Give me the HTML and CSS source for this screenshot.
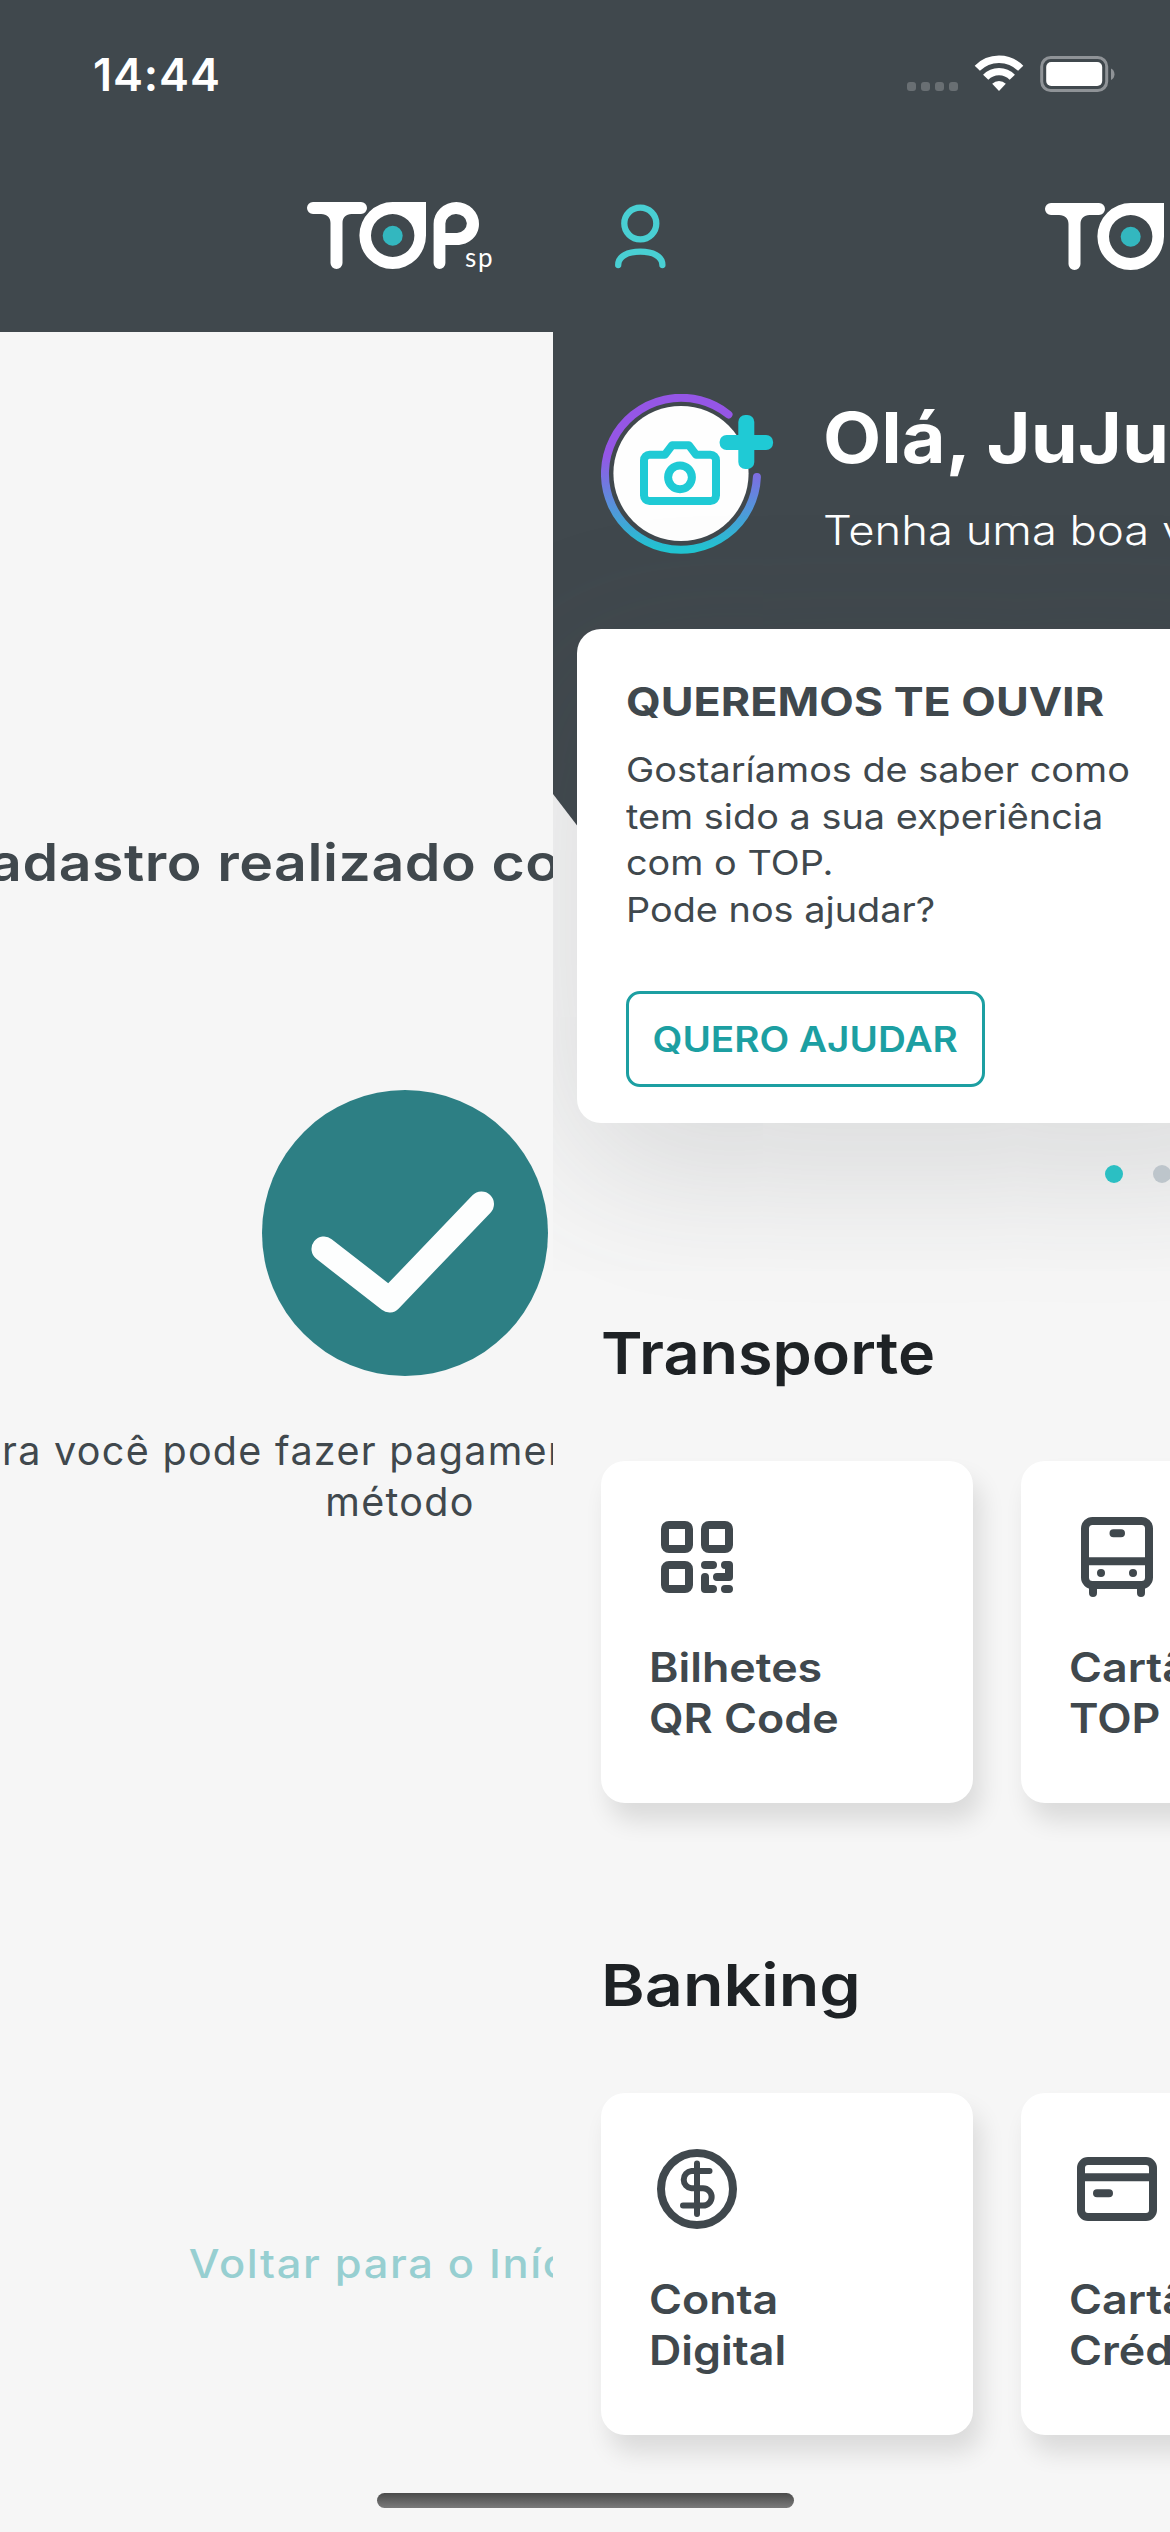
FILE: index.html
```html
<!DOCTYPE html>
<html lang="pt-BR">
<head>
<meta charset="utf-8">
<title>TOP</title>
<link rel="stylesheet" href="styles.css">
</head>
<body>
<svg class="defs" width="0" height="0" aria-hidden="true">
  <defs>
    <symbol id="logo" viewBox="0 0 190 76">
      <path fill="#fff" d="M8 2H56a6 6 0 0 1 0 12H46.500C41 14 37.500 17.500 37.500 23V63a6 6 0 0 1-12 0V23C25.500 17.500 22 14 16 14H8A6 6 0 0 1 8 2Z"/>
      <path fill="#fff" fill-rule="evenodd" d="M88 2h33v33.500A33.300 33.500 0 1 1 88 2ZM87.700 14a21.700 21.500 0 1 0 0 43a21.700 21.500 0 0 0 0-43Z"/>
      <circle cx="87.700" cy="35.700" r="10" fill="#33b7bf"/>
      <path fill="#fff" fill-rule="evenodd" d="M128.600 24a22.700 22 0 0 1 45.400 0c0 12-10 21-22 21h-11.600v18a5.900 6 0 0 1-11.800 0ZM140.400 33H152a10.700 9.500 0 1 0-11.600-9.500Z"/>
      <text x="160" y="66.500" class="logo__sp">sp</text>
    </symbol>
  </defs>
</svg>

<div class="phone">
  <div class="under">
  <main class="done">
    <header class="topbar"><svg class="logo" width="190" height="76"><use href="#logo"/></svg></header>
    <h1 class="done__title">Cadastro realizado com sucesso</h1>
    <svg class="done__check" viewBox="0 0 286 286">
      <circle cx="143" cy="143" r="143" fill="#2d7f84"/>
      <path d="M62 159 127.500 210 219.500 114" fill="none" stroke="#fdfefe" stroke-width="25" stroke-linecap="round" stroke-linejoin="round"/>
    </svg>
    <p class="done__text">Agora você pode fazer pagamentos com o novo<br>método</p>
    <a class="done__link">Voltar para o Início</a>
  </main>
  </div>

  <section class="home">
    <div class="home__backdrop"></div>
    <header class="topbar topbar--home">
      <svg class="user" width="52" height="68" viewBox="0 0 52 68" fill="none" stroke="#49cfd3" stroke-width="6.300" stroke-linecap="round">
        <ellipse cx="26.300" cy="22.500" rx="16" ry="15.800"/>
        <path d="M4.200 64C4.200 55 14 50.700 26.300 50.700S48.400 55 48.400 64"/>
      </svg>
      <svg class="logo" width="190" height="76"><use href="#logo"/></svg>
    </header>

    <div class="profile">
      <svg class="avatar" width="174" height="160" viewBox="0 0 174 160" fill="none">
        <defs>
          <linearGradient id="ring" x1="0" y1="0" x2="0" y2="160" gradientUnits="userSpaceOnUse">
            <stop offset=".380" stop-color="#9556e6"/>
            <stop offset=".970" stop-color="#22c5d2"/>
          </linearGradient>
        </defs>
        <path d="M127.500 20.500A76 76 0 1 0 155.900 83" stroke="url(#ring)" stroke-width="8" stroke-linecap="round"/>
        <circle cx="80" cy="79.500" r="67.600" fill="#fefefe"/>
        <g stroke="#1fcad5" stroke-width="8" stroke-linejoin="round">
          <path d="M48.500 60.700H64L71 51.300H88L95 60.700H109.500a5.500 5.500 0 0 1 5.500 5.500V101.500a5.500 5.500 0 0 1-5.500 5.500H48.500a5.500 5.500 0 0 1-5.500-5.500V66.200a5.500 5.500 0 0 1 5.500-5.500Z"/>
          <circle cx="79" cy="83.300" r="11.900"/>
        </g>
        <rect x="137.300" y="21" width="16" height="54" rx="7" fill="#1fcad5"/>
        <rect x="118.600" y="41" width="53.500" height="15" rx="7" fill="#1fcad5"/>
      </svg>
      <div class="profile__text">
        <h2 class="profile__name">Olá, JuJu!</h2>
        <p class="profile__sub">Tenha uma boa viagem</p>
      </div>
    </div>

    <article class="promo">
      <h3 class="promo__title">QUEREMOS TE OUVIR</h3>
      <p class="promo__text">Gostaríamos de saber como<br>tem sido a sua experiência<br>com o TOP.<br>Pode nos ajudar?</p>
      <a class="promo__btn"><span class="promo__btn-label">QUERO AJUDAR</span></a>
    </article>
    <div class="dots"><i class="dot dot--on"></i><i class="dot"></i></div>

    <h2 class="section">Transporte</h2>
    <div class="cards">
      <div class="card">
        <svg class="icon" viewBox="0 0 96 96">
          <rect x="16" y="16" width="24" height="24" rx="4"/>
          <rect x="56" y="16" width="24" height="24" rx="4"/>
          <rect x="16" y="56" width="24" height="24" rx="4"/>
          <path d="M56 56H64M76 56H80V68H68M56 68V80H64M76 80H80"/>
        </svg>
        <p class="card__label">Bilhetes<br>QR Code</p>
      </div>
      <div class="card">
        <svg class="icon" viewBox="0 0 96 96">
          <rect x="16" y="12" width="64" height="64" rx="7.500"/>
          <path d="M16 52.300H80M44.500 24.300H52M24 78V84M72 78V84"/>
          <path d="M32 64h.01M64 64h.01"/>
        </svg>
        <p class="card__label">Cartão<br>TOP</p>
      </div>
    </div>

    <h2 class="section section--banking">Banking</h2>
    <div class="cards">
      <div class="card">
        <svg class="icon" viewBox="0 0 96 96">
          <circle cx="48" cy="48" r="36"/>
          <path stroke-width="6" d="M48 22.500V73M60.500 30H42.500a8.700 8.700 0 0 0 0 17.300H54a8.600 8.600 0 0 1 0 17.300H34"/>
        </svg>
        <p class="card__label">Conta<br>Digital</p>
      </div>
      <div class="card">
        <svg class="icon" viewBox="0 0 96 96">
          <rect x="12" y="20" width="72" height="56" rx="7"/>
          <path d="M12 36.300H84M28 52.300H40"/>
        </svg>
        <p class="card__label">Cartão<br>Crédito</p>
      </div>
    </div>
  </section>

  <div class="status">
    <span class="status__time">14:44</span>
    <svg class="status__icons" width="212" height="40" viewBox="0 0 212 40">
      <g fill="#696f73">
        <rect x="0" y="28" width="9" height="9" rx="3"/><rect x="14" y="28" width="9" height="9" rx="3"/>
        <rect x="28" y="28" width="9" height="9" rx="3"/><rect x="42" y="28" width="9" height="9" rx="3"/>
      </g>
      <g fill="none" stroke="#fff" stroke-width="7.300">
        <path d="M70.300 14.300A30.500 30.500 0 0 1 113.700 14.300"/>
        <path d="M78.700 23.200A18.500 18.500 0 0 1 105.300 23.200"/>
      </g>
      <path fill="#fff" d="M85.200 29.700A9.600 9.600 0 0 1 98.800 29.700L92 37Z"/>
      <rect x="134.700" y="3.500" width="65" height="33" rx="9" fill="none" stroke="#8f9397" stroke-width="3"/>
      <rect x="139.200" y="8" width="56" height="24" rx="5" fill="#fff"/>
      <path fill="#8f9397" d="M204 14.500a6.500 6.500 0 0 1 0 11.500Z"/>
    </svg>
  </div>
  <div class="indicator"></div>
</div>
</body>
</html>
```

FILE: styles.css
```css
* { box-sizing: border-box; margin: 0; padding: 0; }
body { font-family: Inter, "Liberation Sans", sans-serif; color: #40484d; }
.defs { position: absolute; }

.phone { position: relative; width: 1170px; height: 2532px; overflow: hidden; background: #f6f6f6; }

/* Header shared by both screens */
.topbar { width: 100%; height: 332px; padding-top: 200px; background: #40484d; display: flex; justify-content: center; flex: none; }
.logo__sp { font: 400 26px Lato, sans-serif; letter-spacing: 1.800px; fill: #fff; }

/* Outgoing screen, slid to the left */
.under { width: 553px; height: 2532px; overflow: hidden; }
.done { width: 1170px; margin-left: -180px; display: flex; flex-direction: column; align-items: center; white-space: nowrap; }
.done .topbar { padding-right: 10px; }
.done__title { margin-top: 501px; font-size: 52px; line-height: 60px; font-weight: 600; letter-spacing: .500px; transform: scaleX(1.100); }
.done__check { width: 286px; height: 286px; margin-top: 196.500px; }
.done__text { margin: 50px 10px 0 0; font-size: 39.500px; line-height: 51px; letter-spacing: 1.300px; text-align: center; }
.done__link { margin: 712px 12px 0 0; font-size: 39.500px; line-height: 48px; font-weight: 500; letter-spacing: 1.500px; color: #97cfd1; transform: scaleX(1.100); }

/* Incoming screen, lies over the outgoing one */
.home { position: absolute; left: 553px; top: 0; width: 1170px; height: 2532px; overflow: hidden; background: #f6f6f6; display: flex; flex-direction: column; }
.home > * { position: relative; }
.home > .home__backdrop { position: absolute; left: 0; top: 0; width: 1170px; height: 930px; background: #40484d; clip-path: polygon(0 0, 100% 0, 100% 100%, 104px 100%, 0 794px); }
.topbar--home { padding: 201px 0 0 61px; justify-content: flex-start; }
.topbar--home .logo { margin-left: 377px; }

/* Widened lettering */
.profile__name, .profile__sub, .promo__title, .promo__text, .section, .card__label { transform-origin: 0 50%; }

.profile { display: flex; padding: 62px 0 0 48px; height: 297px; }
.profile__text { margin: 2px 0 0 48px; color: #fff; white-space: nowrap; }
.profile__name { font-size: 70px; line-height: 84px; font-weight: 700; transform: scaleX(1.080); }
.profile__sub { margin-top: 26px; font-size: 40.500px; line-height: 50px; font-weight: 300; transform: scaleX(1.120); }

.promo { margin-left: 24px; width: 1122px; height: 494px; padding: 49px; border-radius: 24px; background: #fff; box-shadow: 0 40px 160px rgba(64, 72, 77, .180); white-space: nowrap; }
.promo__title { font-size: 40px; line-height: 48px; font-weight: 700; transform: scaleX(1.120); }
.promo__text { margin-top: 21px; font-size: 34.500px; line-height: 46.700px; transform: scaleX(1.097); }
.promo__btn { display: flex; align-items: center; justify-content: center; width: 359px; height: 96px; margin-top: 57px; border: 3px solid #1c9fa2; border-radius: 14px; color: #1c9fa2; font-size: 35px; font-weight: 600; }
.promo__btn-label { transform: scaleX(1.105); }

.dots { display: flex; gap: 30px; margin: 42px 0 0 552px; }
.dot { width: 18px; height: 18px; border-radius: 50%; background: #bdc5cb; }
.dot--on { background: #2bbfc3; }

.section { margin: 135px 0 0 48px; font-size: 58px; line-height: 70px; font-weight: 600; color: #1e2225; transform: scaleX(1.085); }
.section--banking { margin-top: 147px; transform: scaleX(1.145); }
.cards { display: flex; gap: 48px; margin: 72.500px 0 0 48px; }
.card { width: 372px; height: 342.500px; padding: 48px; border-radius: 24px; background: #fff; box-shadow: 8px 18px 24px rgba(0, 0, 0, .110); }
.icon { display: block; width: 96px; height: 96px; fill: none; stroke: #40484d; stroke-width: 8; stroke-linecap: round; stroke-linejoin: round; }
.card__label { margin-top: 37px; font-size: 40.500px; line-height: 51px; font-weight: 600; white-space: nowrap; transform: scaleX(1.105); }

/* System chrome over both screens */
.status { position: absolute; left: 0; top: 0; width: 1170px; padding: 54px 51px 0 93px; display: flex; justify-content: space-between; color: #fff; }
.status__time { font-size: 45px; line-height: 42px; font-weight: 600; letter-spacing: .900px; }
.indicator { position: absolute; left: 377px; top: 2493px; width: 417px; height: 15px; border-radius: 8px; background: linear-gradient(#4b4b4b, #7a7a7a); }
```
